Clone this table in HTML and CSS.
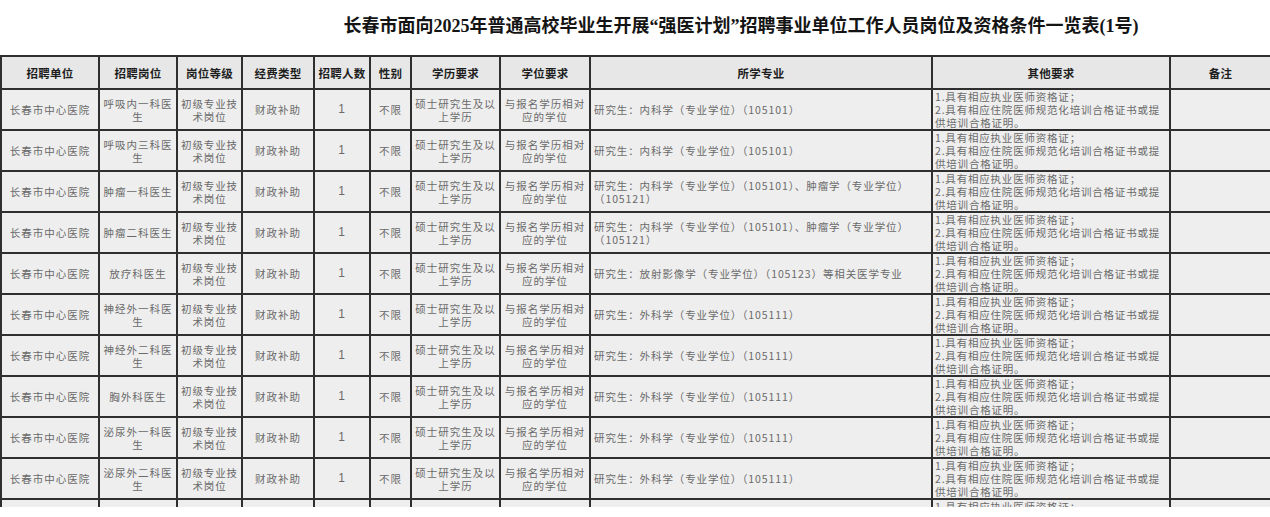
FILE: index.html
```html
<!DOCTYPE html>
<html lang="zh-CN">
<head>
<meta charset="utf-8">
<title>长春市面向2025年普通高校毕业生开展“强医计划”招聘事业单位工作人员岗位及资格条件一览表(1号)</title>
<link rel="stylesheet" href="styles.css">
</head>
<body>
<div class="sheet">
  <h1 class="title">长春市面向2025年普通高校毕业生开展“强医计划”招聘事业单位工作人员岗位及资格条件一览表(1号)</h1>
  <table class="grid">
    <colgroup>
      <col class="c1"><col class="c2"><col class="c3"><col class="c4"><col class="c5"><col class="c6"><col class="c7"><col class="c8"><col class="c9"><col class="c10"><col class="c11">
    </colgroup>
    <thead>
      <tr>
        <th>招聘单位</th><th>招聘岗位</th><th>岗位等级</th><th>经费类型</th><th>招聘人数</th><th>性别</th><th>学历要求</th><th>学位要求</th><th>所学专业</th><th>其他要求</th><th>备注</th>
      </tr>
    </thead>
    <tbody>
      <tr><td>长春市中心医院</td><td>呼吸内一科医生</td><td class="tight">初级专业技术岗位</td><td>财政补助</td><td class="num">1</td><td>不限</td><td>硕士研究生及以上学历</td><td>与报名学历相对应的学位</td><td class="major">研究生：内科学（专业学位）（105101）</td><td class="other">1.具有相应执业医师资格证；<br>2.具有相应住院医师规范化培训合格证书或提<br>供培训合格证明。</td><td></td></tr>
      <tr><td>长春市中心医院</td><td>呼吸内三科医生</td><td class="tight">初级专业技术岗位</td><td>财政补助</td><td class="num">1</td><td>不限</td><td>硕士研究生及以上学历</td><td>与报名学历相对应的学位</td><td class="major">研究生：内科学（专业学位）（105101）</td><td class="other">1.具有相应执业医师资格证；<br>2.具有相应住院医师规范化培训合格证书或提<br>供培训合格证明。</td><td></td></tr>
      <tr><td>长春市中心医院</td><td>肿瘤一科医生</td><td class="tight">初级专业技术岗位</td><td>财政补助</td><td class="num">1</td><td>不限</td><td>硕士研究生及以上学历</td><td>与报名学历相对应的学位</td><td class="major">研究生：内科学（专业学位）（105101）、肿瘤学（专业学位）<br>（105121）</td><td class="other">1.具有相应执业医师资格证；<br>2.具有相应住院医师规范化培训合格证书或提<br>供培训合格证明。</td><td></td></tr>
      <tr><td>长春市中心医院</td><td>肿瘤二科医生</td><td class="tight">初级专业技术岗位</td><td>财政补助</td><td class="num">1</td><td>不限</td><td>硕士研究生及以上学历</td><td>与报名学历相对应的学位</td><td class="major">研究生：内科学（专业学位）（105101）、肿瘤学（专业学位）<br>（105121）</td><td class="other">1.具有相应执业医师资格证；<br>2.具有相应住院医师规范化培训合格证书或提<br>供培训合格证明。</td><td></td></tr>
      <tr><td>长春市中心医院</td><td>放疗科医生</td><td class="tight">初级专业技术岗位</td><td>财政补助</td><td class="num">1</td><td>不限</td><td>硕士研究生及以上学历</td><td>与报名学历相对应的学位</td><td class="major">研究生：放射影像学（专业学位）（105123）等相关医学专业</td><td class="other">1.具有相应执业医师资格证；<br>2.具有相应住院医师规范化培训合格证书或提<br>供培训合格证明。</td><td></td></tr>
      <tr><td>长春市中心医院</td><td>神经外一科医生</td><td class="tight">初级专业技术岗位</td><td>财政补助</td><td class="num">1</td><td>不限</td><td>硕士研究生及以上学历</td><td>与报名学历相对应的学位</td><td class="major">研究生：外科学（专业学位）（105111）</td><td class="other">1.具有相应执业医师资格证；<br>2.具有相应住院医师规范化培训合格证书或提<br>供培训合格证明。</td><td></td></tr>
      <tr><td>长春市中心医院</td><td>神经外二科医生</td><td class="tight">初级专业技术岗位</td><td>财政补助</td><td class="num">1</td><td>不限</td><td>硕士研究生及以上学历</td><td>与报名学历相对应的学位</td><td class="major">研究生：外科学（专业学位）（105111）</td><td class="other">1.具有相应执业医师资格证；<br>2.具有相应住院医师规范化培训合格证书或提<br>供培训合格证明。</td><td></td></tr>
      <tr><td>长春市中心医院</td><td>胸外科医生</td><td class="tight">初级专业技术岗位</td><td>财政补助</td><td class="num">1</td><td>不限</td><td>硕士研究生及以上学历</td><td>与报名学历相对应的学位</td><td class="major">研究生：外科学（专业学位）（105111）</td><td class="other">1.具有相应执业医师资格证；<br>2.具有相应住院医师规范化培训合格证书或提<br>供培训合格证明。</td><td></td></tr>
      <tr><td>长春市中心医院</td><td>泌尿外一科医生</td><td class="tight">初级专业技术岗位</td><td>财政补助</td><td class="num">1</td><td>不限</td><td>硕士研究生及以上学历</td><td>与报名学历相对应的学位</td><td class="major">研究生：外科学（专业学位）（105111）</td><td class="other">1.具有相应执业医师资格证；<br>2.具有相应住院医师规范化培训合格证书或提<br>供培训合格证明。</td><td></td></tr>
      <tr><td>长春市中心医院</td><td>泌尿外二科医生</td><td class="tight">初级专业技术岗位</td><td>财政补助</td><td class="num">1</td><td>不限</td><td>硕士研究生及以上学历</td><td>与报名学历相对应的学位</td><td class="major">研究生：外科学（专业学位）（105111）</td><td class="other">1.具有相应执业医师资格证；<br>2.具有相应住院医师规范化培训合格证书或提<br>供培训合格证明。</td><td></td></tr>
      <tr><td>长春市中心医院</td><td>耳鼻咽喉科医生</td><td class="tight">初级专业技术岗位</td><td>财政补助</td><td class="num">2</td><td>不限</td><td>硕士研究生及以上学历</td><td>与报名学历相对应的学位</td><td class="major">研究生：耳鼻咽喉科学（专业学位）（105117）</td><td class="other">1.具有相应执业医师资格证；<br>2.具有相应住院医师规范化培训合格证书或提<br>供培训合格证明。</td><td></td></tr>
    </tbody>
  </table>
</div>
</body>
</html>
```
FILE: styles.css
```css
html, body {
  margin: 0;
  padding: 0;
  background: #ffffff;
}

body {
  width: 1270px;
  height: 517px;
  overflow: hidden;
  font-family: "Noto Sans CJK SC", "Liberation Sans", sans-serif;
}

.sheet {
  width: 1270px;
  height: 507px;
  overflow: hidden;
  background: #ffffff;
}

.title {
  margin: 0;
  height: 55px;
  box-sizing: border-box;
  padding: 13px 0 0 212px;
  text-align: center;
  font-family: "Liberation Serif", "Noto Sans CJK SC", serif;
  font-size: 18px;
  font-weight: 700;
  line-height: 26px;
  color: #141414;
  white-space: nowrap;
}

.grid {
  width: 1270px;
  table-layout: fixed;
  border-collapse: collapse;
  border: 2px solid #2a2a2a;
}

.c1 { width: 98px; }
.c2 { width: 78px; }
.c3 { width: 65px; }
.c4 { width: 72px; }
.c5 { width: 56px; }
.c6 { width: 41px; }
.c7 { width: 89px; }
.c8 { width: 90px; }
.c9 { width: 342px; }
.c10 { width: 238px; }
.c11 { width: 101px; }

.grid th,
.grid td {
  border: 2px solid #2f2f2f;
  padding: 0 2px;
  vertical-align: middle;
  text-align: center;
  overflow: hidden;
}

.grid th {
  height: 31px;
  background: #e7e7e7;
  color: #1e1e1e;
  font-size: 11.5px;
  font-weight: 700;
  letter-spacing: 0.2px;
}

.grid td {
  height: 38.8px;
  background: #eeeeee;
  color: #6a6a6a;
  font-size: 10.5px;
  line-height: 13px;
  letter-spacing: 1px;
}

.grid td.tight {
  padding: 0;
  letter-spacing: 0.9px;
}

.grid td.num {
  font-family: "Liberation Sans", sans-serif;
  font-size: 12px;
}

.grid td.major {
  text-align: left;
  padding-left: 3px;
  letter-spacing: 0.9px;
}

.grid td.other {
  text-align: left;
  padding: 0 1px 0 2px;
  letter-spacing: 0.8px;
  white-space: nowrap;
}
```
